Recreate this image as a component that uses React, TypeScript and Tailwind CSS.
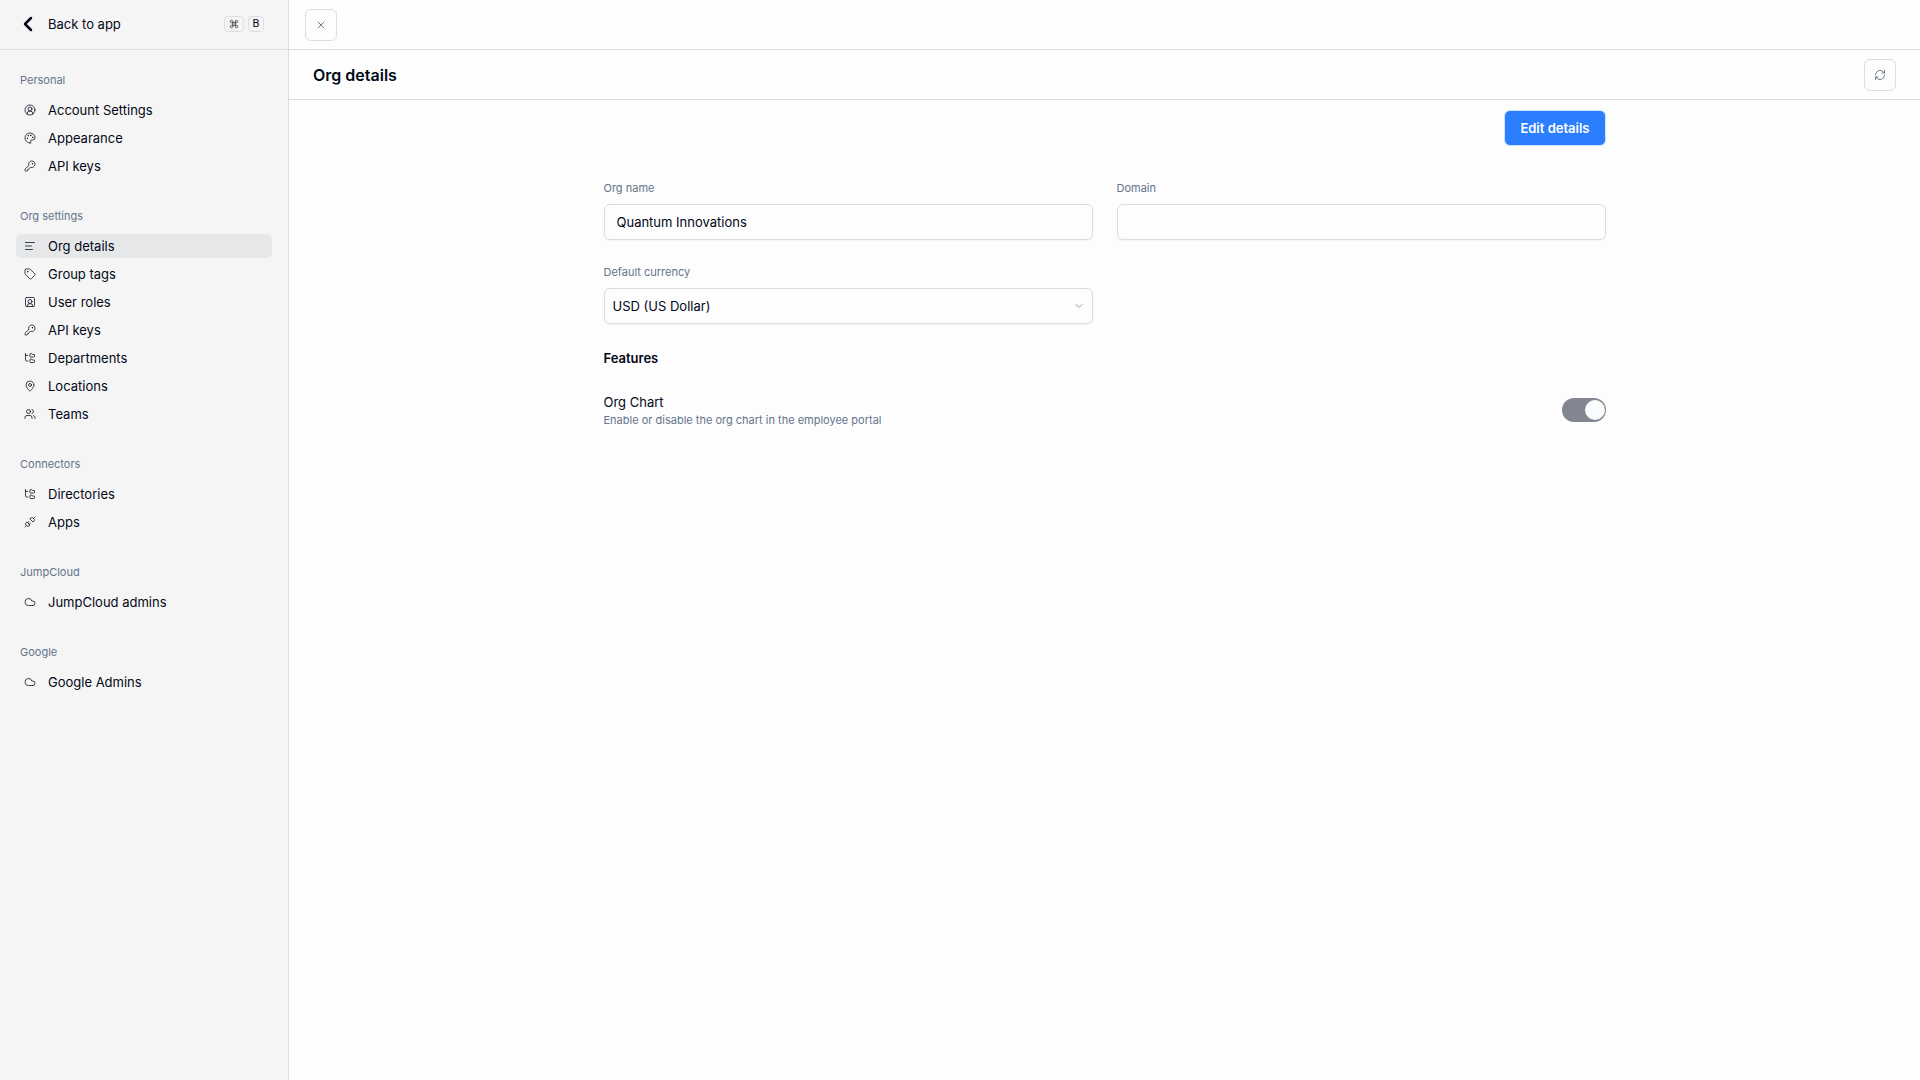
import React from "react";
import {
  ChevronDown,
  ChevronLeft,
  CircleUserRound,
  Cloud,
  Command,
  FolderTree,
  KeyRound,
  MapPin,
  Palette,
  RefreshCw,
  SquareUserRound,
  Tag,
  TextAlignStart,
  Unplug,
  Users,
  X,
  type LucideIcon,
} from "lucide-react";

type NavItem = { label: string; icon: LucideIcon; active?: boolean };
type NavGroup = { title: string; items: NavItem[] };

const groups: NavGroup[] = [
  {
    title: "Personal",
    items: [
      { label: "Account Settings", icon: CircleUserRound },
      { label: "Appearance", icon: Palette },
      { label: "API keys", icon: KeyRound },
    ],
  },
  {
    title: "Org settings",
    items: [
      { label: "Org details", icon: TextAlignStart, active: true },
      { label: "Group tags", icon: Tag },
      { label: "User roles", icon: SquareUserRound },
      { label: "API keys", icon: KeyRound },
      { label: "Departments", icon: FolderTree },
      { label: "Locations", icon: MapPin },
      { label: "Teams", icon: Users },
    ],
  },
  {
    title: "Connectors",
    items: [
      { label: "Directories", icon: FolderTree },
      { label: "Apps", icon: Unplug },
    ],
  },
  { title: "JumpCloud", items: [{ label: "JumpCloud admins", icon: Cloud }] },
  { title: "Google", items: [{ label: "Google Admins", icon: Cloud }] },
];

function Sidebar() {
  return (
    <aside className="flex w-[289px] shrink-0 flex-col border-r border-[#dcdddf] bg-[#f5f5f5]">
      <div className="flex h-[50px] items-center justify-between border-b border-[#dcdddf] pr-6 pb-0.5 pl-4">
        <a href="#" className="flex items-center gap-2">
          <ChevronLeft className="size-6" strokeWidth={2.5} />
          <span className="text-[13px] leading-5">Back to app</span>
        </a>
        <span className="flex items-center gap-1">
          <kbd className="flex h-4 w-5 items-center justify-center rounded border border-[#dcdddf]">
            <Command className="size-2.5 text-[#333842]" strokeWidth={2} />
          </kbd>
          <kbd className="flex h-4 w-4 items-center justify-center rounded border border-[#dcdddf] font-['Roboto'] text-[11px] leading-none">
            B
          </kbd>
        </span>
      </div>
      <nav className="flex flex-col gap-6 px-4 pt-4" aria-label="Settings">
        {groups.map((group) => (
          <section key={group.title} className="flex flex-col gap-1">
            <h2 className="flex h-7 items-center px-1 text-[11px] text-[#64748b]">{group.title}</h2>
            <ul className="flex flex-col gap-1">
              {group.items.map(({ label, icon: Icon, active }) => (
                <li key={label}>
                  <a
                    href="#"
                    aria-current={active ? "page" : undefined}
                    className={`flex h-6 items-center gap-3 rounded-md px-2 text-[13px] leading-5 ${active ? "bg-[#e5e7e9]" : ""}`}
                  >
                    <Icon className="size-3 text-[#020817]" strokeWidth={1.5} />
                    {label}
                  </a>
                </li>
              ))}
            </ul>
          </section>
        ))}
      </nav>
    </aside>
  );
}

function IconButton({ label, icon: Icon }: { label: string; icon: LucideIcon }) {
  return (
    <button
      type="button"
      aria-label={label}
      className="flex size-8 items-center justify-center rounded-md border border-[#dcdddf] text-[#475569]"
    >
      <Icon className="size-3" strokeWidth={1.5} />
    </button>
  );
}

export default function App() {
  return (
    <div className="flex min-h-screen bg-[#fdfdfd] font-[Inter,sans-serif] text-[#020817]">
      <Sidebar />
      <main className="flex min-w-0 flex-1 flex-col">
        <div className="flex h-[50px] items-center border-b border-[#dcdddf] px-4">
          <IconButton label="Close" icon={X} />
        </div>
        <header className="flex h-[50px] items-center justify-between border-b border-[#dcdddf] px-6">
          <h1 className="text-base font-semibold">Org details</h1>
          <IconButton label="Refresh" icon={RefreshCw} />
        </header>
        <form className="mx-auto flex w-full max-w-[1050px] flex-col px-6 pt-2.5">
          <button
            type="button"
            className="h-9 self-end rounded-md border border-[#cfe2ff] bg-[#2b7fff] px-[15px] text-[13px] leading-5 font-semibold text-white"
          >
            Edit details
          </button>
          <div className="mt-[34px] grid grid-cols-2 gap-6">
            <div className="flex flex-col gap-2">
              <label htmlFor="org-name" className="text-[11px] leading-4 text-[#64748b]">
                Org name
              </label>
              <input
                id="org-name"
                type="text"
                defaultValue="Quantum Innovations"
                className="h-9 rounded-md border border-[#dcdddf] px-3 text-[13px] shadow-xs"
              />
            </div>
            <div className="flex flex-col gap-2">
              <label htmlFor="domain" className="text-[11px] leading-4 text-[#64748b]">
                Domain
              </label>
              <input
                id="domain"
                type="text"
                className="h-9 rounded-md border border-[#dcdddf] px-3 text-[13px] shadow-xs"
              />
            </div>
            <div className="flex flex-col gap-2">
              <label htmlFor="currency" className="text-[11px] leading-4 text-[#64748b]">
                Default currency
              </label>
              <div className="relative">
                <select
                  id="currency"
                  className="h-9 w-full appearance-none rounded-md border border-[#dcdddf] px-2 text-[13px] leading-5 shadow-xs"
                >
                  <option>USD (US Dollar)</option>
                </select>
                <ChevronDown
                  className="pointer-events-none absolute top-3 right-2 size-3 text-[#9a9ca3]"
                  strokeWidth={2}
                />
              </div>
            </div>
          </div>
          <h2 className="mt-6 text-[13px] leading-5 font-semibold">Features</h2>
          <div className="mt-6 flex items-center justify-between">
            <div>
              <label htmlFor="org-chart" className="block text-[13px] leading-5">
                Org Chart
              </label>
              <p className="text-[11px] leading-4 text-[#64748b]">
                Enable or disable the org chart in the employee portal
              </p>
            </div>
            <input
              id="org-chart"
              type="checkbox"
              role="switch"
              defaultChecked
              className="flex h-6 w-11 appearance-none items-center rounded-full bg-[#818690] py-0.5 pr-px pl-0.5 before:size-5 before:rounded-full before:bg-[#fbfcfe] before:content-[''] checked:justify-end"
            />
          </div>
        </form>
      </main>
    </div>
  );
}
